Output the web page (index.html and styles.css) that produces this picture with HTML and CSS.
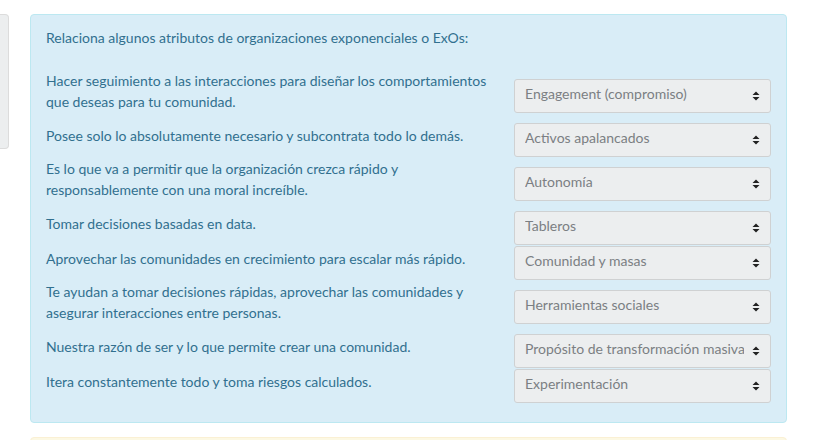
FILE: index.html
```html
<!DOCTYPE html>
<html lang="es">
<head>
<meta charset="utf-8">
<title>ExOs</title>
<link rel="stylesheet" href="styles.css">
</head>
<body>
<div class="page">
  <div class="side"></div>
  <div class="content">
    <div class="alert-info">
      <p class="qtext">Relaciona algunos atributos de organizaciones exponenciales o ExOs:</p>
      <div class="answer">
        <div class="row">
          <p class="text">Hacer seguimiento a las interacciones para diseñar los comportamientos que deseas para tu comunidad.</p>
          <div class="control"><select class="sel" disabled><option>Engagement (compromiso)</option></select><svg class="arrow" viewBox="0 0 8 10" width="8" height="10"><path d="M4 0.5L7.5 4H0.5Z M4 9.5L7.5 6H0.5Z" fill="#222"/></svg></div>
        </div>
        <div class="row">
          <p class="text">Posee solo lo absolutamente necesario y subcontrata todo lo demás.</p>
          <div class="control"><select class="sel" disabled><option>Activos apalancados</option></select><svg class="arrow" viewBox="0 0 8 10" width="8" height="10"><path d="M4 0.5L7.5 4H0.5Z M4 9.5L7.5 6H0.5Z" fill="#222"/></svg></div>
        </div>
        <div class="row">
          <p class="text">Es lo que va a permitir que la organización crezca rápido y responsablemente con una moral increíble.</p>
          <div class="control"><select class="sel" disabled><option>Autonomía</option></select><svg class="arrow" viewBox="0 0 8 10" width="8" height="10"><path d="M4 0.5L7.5 4H0.5Z M4 9.5L7.5 6H0.5Z" fill="#222"/></svg></div>
        </div>
        <div class="row">
          <p class="text">Tomar decisiones basadas en data.</p>
          <div class="control"><select class="sel" disabled><option>Tableros</option></select><svg class="arrow" viewBox="0 0 8 10" width="8" height="10"><path d="M4 0.5L7.5 4H0.5Z M4 9.5L7.5 6H0.5Z" fill="#222"/></svg></div>
        </div>
        <div class="row">
          <p class="text">Aprovechar las comunidades en crecimiento para escalar más rápido.</p>
          <div class="control"><select class="sel" disabled><option>Comunidad y masas</option></select><svg class="arrow" viewBox="0 0 8 10" width="8" height="10"><path d="M4 0.5L7.5 4H0.5Z M4 9.5L7.5 6H0.5Z" fill="#222"/></svg></div>
        </div>
        <div class="row">
          <p class="text">Te ayudan a tomar decisiones rápidas, aprovechar las comunidades y asegurar interacciones entre personas.</p>
          <div class="control"><select class="sel" disabled><option>Herramientas sociales</option></select><svg class="arrow" viewBox="0 0 8 10" width="8" height="10"><path d="M4 0.5L7.5 4H0.5Z M4 9.5L7.5 6H0.5Z" fill="#222"/></svg></div>
        </div>
        <div class="row">
          <p class="text">Nuestra razón de ser y lo que permite crear una comunidad.</p>
          <div class="control"><select class="sel" disabled><option>Propósito de transformación masiva</option></select><svg class="arrow" viewBox="0 0 8 10" width="8" height="10"><path d="M4 0.5L7.5 4H0.5Z M4 9.5L7.5 6H0.5Z" fill="#222"/></svg></div>
        </div>
        <div class="row">
          <p class="text">Itera constantemente todo y toma riesgos calculados.</p>
          <div class="control"><select class="sel" disabled><option>Experimentación</option></select><svg class="arrow" viewBox="0 0 8 10" width="8" height="10"><path d="M4 0.5L7.5 4H0.5Z M4 9.5L7.5 6H0.5Z" fill="#222"/></svg></div>
        </div>
      </div>
    </div>
    <div class="alert-warning"></div>
  </div>
</div>
</body>
</html>
```

FILE: styles.css
```css
html, body {
  margin: 0;
  padding: 0;
  background: #fff;
}
body {
  font-family: Lato, "Open Sans", sans-serif;
  font-size: 14px;
  line-height: 21px;
  color: #31708f;
}
.page {
  display: flex;
  align-items: flex-start;
  gap: 21px;
  padding-top: 14px;
}
.side {
  width: 8px;
  height: 133px;
  background: #eceeef;
  border: 1px solid #dcdcdc;
  border-left: none;
  border-radius: 0 4px 4px 0;
  flex: none;
}
.content {
  width: 757px;
  flex: none;
}
.alert-info {
  background: #d9edf7;
  border: 1px solid #bce8f1;
  border-radius: 4px;
  padding: 12px 15px 19px 15px;
  margin-bottom: 14px;
}
.qtext {
  margin: 0 0 22px 0;
}
.answer {
  display: flex;
  flex-direction: column;
  gap: 1px;
}
.row {
  display: grid;
  grid-template-columns: 1fr 257px;
  column-gap: 20px;
  align-items: center;
}
.text {
  margin: 0 0 10px 0;
}
.control {
  position: relative;
  height: 34px;
}
.sel {
  appearance: none;
  -webkit-appearance: none;
  display: block;
  width: 100%;
  height: 34px;
  box-sizing: border-box;
  margin: 0;
  padding: 0 26px 6px 10px;
  font-family: Lato, "Open Sans", sans-serif;
  font-size: 14px;
  color: #7b7f83;
  background: #eceeef;
  border: 1px solid #cfd1d2;
  border-radius: 3px;
  opacity: 1;
}
.arrow {
  position: absolute;
  right: 11px;
  top: 12px;
}
.alert-warning {
  height: 40px;
  background: #fcf8e3;
  border: 1px solid #faf0d4;
  border-radius: 4px;
}
```
